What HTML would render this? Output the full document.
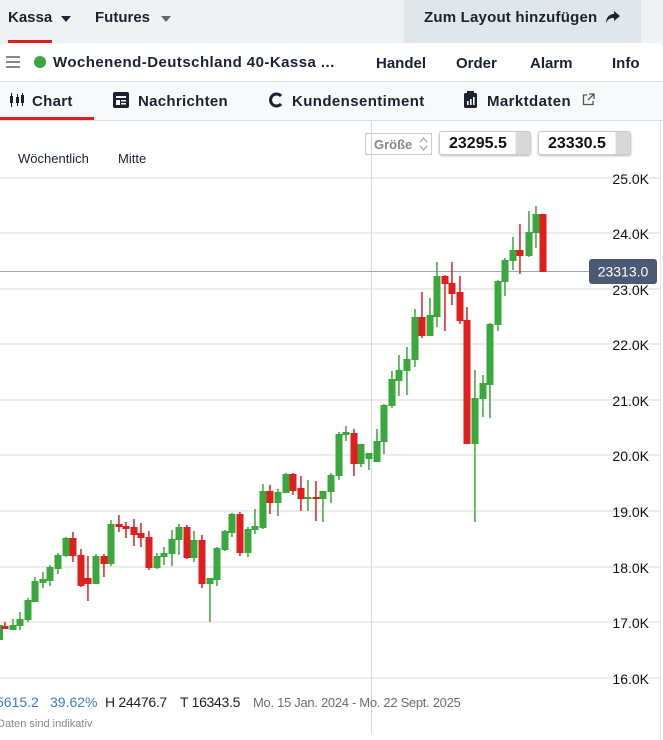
<!DOCTYPE html>
<html><head><meta charset="utf-8"><style>
*{margin:0;padding:0;box-sizing:border-box}
body{width:663px;height:740px;overflow:hidden;background:#eef2f3;font-family:"Liberation Sans",sans-serif;color:#1a2233;position:relative}
.a{position:absolute;white-space:nowrap}
.b{font-weight:bold;font-size:15px}
</style></head><body>
<div class="a" style="left:0;top:0;width:663px;height:43px;background:#eef2f3"></div>
<div class="a b" style="left:8px;top:9px">Kassa</div>
<div class="a" style="left:61px;top:16px;width:0;height:0;border-left:5px solid transparent;border-right:5px solid transparent;border-top:6px solid #1a2233"></div>
<div class="a b" style="left:95px;top:9px">Futures</div>
<div class="a" style="left:161px;top:16px;width:0;height:0;border-left:5px solid transparent;border-right:5px solid transparent;border-top:6px solid #666"></div>
<div class="a" style="left:8px;top:40px;width:44px;height:3px;background:#e01e1e"></div>
<div class="a" style="left:404px;top:0;width:237px;height:43px;background:#e0e7ea"></div>
<div class="a b" style="left:424px;top:9px;letter-spacing:0.2px">Zum Layout hinzufügen</div>
<svg class="a" style="left:605px;top:10px" width="16" height="14" viewBox="0 0 16 14"><path d="M9 1 L15 6 L9 11 L9 8 C5 8 3 9 1 13 C1 8 4 4 9 4 Z" fill="#1a2233"/></svg>

<div class="a" style="left:0;top:43px;width:663px;height:697px;background:#fff;border-radius:6px 6px 0 0"></div>
<div class="a" style="left:6px;top:56px;width:14px;height:2px;background:#888;box-shadow:0 5px 0 #888,0 10px 0 #888"></div>
<div class="a" style="left:34px;top:56px;width:12px;height:12px;border-radius:50%;background:#3aa83c"></div>
<div class="a b" style="left:53px;top:54px;letter-spacing:0.45px">Wochenend-Deutschland 40-Kassa ...</div>
<div class="a b" style="left:376px;top:55px">Handel</div>
<div class="a b" style="left:456px;top:55px">Order</div>
<div class="a b" style="left:530px;top:55px">Alarm</div>
<div class="a b" style="left:612px;top:55px">Info</div>
<div class="a" style="left:0;top:81px;width:663px;height:40px;background:#f7f9fa;border-top:1px solid #dadfe2;border-bottom:1px solid #dadfe2"></div>
<svg class="a" style="left:9px;top:93px" width="16" height="14"><rect x="1" y="3" width="3" height="7" fill="#1a2233"/><rect x="2" y="0" width="1" height="14" fill="#1a2233"/><rect x="7" y="4" width="3" height="6" fill="#1a2233"/><rect x="8" y="1" width="1" height="12" fill="#1a2233"/><rect x="12" y="2" width="3" height="8" fill="#1a2233"/><rect x="13" y="0" width="1" height="13" fill="#1a2233"/></svg>
<div class="a b" style="left:32px;top:93px;letter-spacing:0.3px">Chart</div>
<div class="a" style="left:0;top:117px;width:94px;height:3px;background:#e01e1e"></div>
<svg class="a" style="left:113px;top:92px" width="16" height="16"><rect x="0" y="0" width="16" height="16" rx="2" fill="#1a2233"/><rect x="3" y="4" width="10" height="2" fill="#fff"/><rect x="3" y="8" width="4" height="5" fill="#fff"/><rect x="8" y="8" width="5" height="1.5" fill="#fff"/><rect x="8" y="11" width="5" height="1.5" fill="#fff"/></svg>
<div class="a b" style="left:138px;top:93px;letter-spacing:0.3px">Nachrichten</div>
<svg class="a" style="left:268px;top:92px" width="16" height="16"><path d="M13 4 A6 6 0 1 0 13 12" fill="none" stroke="#1a2233" stroke-width="3"/></svg>
<div class="a b" style="left:292px;top:93px;letter-spacing:0.4px">Kundensentiment</div>
<svg class="a" style="left:464px;top:91px" width="13" height="17"><rect x="0" y="2" width="13" height="15" rx="1.5" fill="#1a2233"/><rect x="3" y="0" width="7" height="4" fill="#1a2233"/><rect x="3" y="10" width="1.6" height="4" fill="#fff"/><rect x="6" y="8" width="1.6" height="6" fill="#fff"/><rect x="9" y="6" width="1.6" height="8" fill="#fff"/></svg>
<div class="a b" style="left:487px;top:93px;letter-spacing:0.4px">Marktdaten</div>
<svg class="a" style="left:582px;top:93px" width="13" height="13"><path d="M5 2 H1.5 V11.5 H11 V8" fill="none" stroke="#555" stroke-width="1.3"/><path d="M7 1 H12 V6 M12 1 L6 7" fill="none" stroke="#555" stroke-width="1.3"/></svg>

<div class="a" style="left:18px;top:151px;font-size:13px">Wöchentlich</div>
<div class="a" style="left:118px;top:151px;font-size:13px">Mitte</div>
<div class="a" style="left:365px;top:133px;width:67px;height:22px;border:1px solid #ccc;font-size:13px;color:#888;padding:3px 0 0 8px;font-weight:bold">Größe</div>
<svg class="a" style="left:419px;top:136px" width="9" height="16"><path d="M1 6 L4.5 2 L8 6 M1 10 L4.5 14 L8 10" fill="none" stroke="#999" stroke-width="1"/></svg>
<div class="a" style="left:439px;top:131px;width:92px;height:24px;border:1px solid #ccc;border-radius:3px;box-shadow:0 1px 2px #bbb;background:linear-gradient(90deg,#fff 84%,#d6d8dc 84%);font-size:16px;font-weight:bold;padding:3px 0 0 9px;color:#111">23295.5</div>
<div class="a" style="left:538px;top:131px;width:93px;height:24px;border:1px solid #ccc;border-radius:3px;box-shadow:0 1px 2px #bbb;background:linear-gradient(90deg,#fff 84%,#d6d8dc 84%);font-size:16px;font-weight:bold;padding:3px 0 0 9px;color:#111">23330.5</div>

<svg class="a" style="left:0;top:0" width="663" height="740">
<g fill="#ececec">
<rect x="0" y="177" width="660" height="2"/><rect x="0" y="232" width="660" height="2"/><rect x="0" y="288" width="660" height="2"/><rect x="0" y="343" width="660" height="2"/><rect x="0" y="399" width="660" height="2"/><rect x="0" y="454" width="660" height="2"/><rect x="0" y="510" width="660" height="2"/><rect x="0" y="566" width="660" height="2"/><rect x="0" y="621" width="660" height="2"/><rect x="0" y="677" width="660" height="2"/>
</g>
<rect x="371" y="121" width="1" height="613" fill="#d8d8d8"/>
<rect x="660" y="121" width="1" height="619" fill="#e4e4e4"/>
<rect x="0" y="271" width="590" height="1" fill="#a0a8b4"/>
<g font-family="Liberation Sans,sans-serif" font-size="14" fill="#111" text-anchor="end">
<text x="649" y="184">25.0K</text><text x="649" y="239">24.0K</text><text x="649" y="295">23.0K</text><text x="649" y="350">22.0K</text><text x="649" y="406">21.0K</text><text x="649" y="461">20.0K</text><text x="649" y="517">19.0K</text><text x="649" y="573">18.0K</text><text x="649" y="628">17.0K</text><text x="649" y="684">16.0K</text>
</g>
<rect x="589" y="259" width="68" height="25" rx="3" fill="#4b5a74"/>
<text x="623" y="276.5" font-family="Liberation Sans,sans-serif" font-size="14" fill="#fff" text-anchor="middle">23313.0</text>
<g id="c">
<g fill="#3aa83c">
<rect x="-2" y="625" width="5" height="15"/>
<rect x="12.2" y="619" width="1.5" height="11"/><rect x="9.5" y="625" width="7" height="5"/>
<rect x="19.2" y="612" width="1.5" height="18"/><rect x="16.5" y="619" width="7" height="7"/>
<rect x="27.2" y="598" width="1.5" height="24"/><rect x="24.5" y="600" width="7" height="20"/>
<rect x="34.2" y="577" width="1.5" height="25"/><rect x="31.5" y="581" width="7" height="21"/>
<rect x="42.2" y="572" width="1.5" height="16"/><rect x="39.5" y="579" width="7" height="4"/>
<rect x="49.2" y="565" width="1.5" height="21"/><rect x="46.5" y="567" width="7" height="14"/>
<rect x="57.2" y="553" width="1.5" height="21"/><rect x="54.5" y="555" width="7" height="14"/>
<rect x="65.2" y="537" width="1.5" height="20"/><rect x="62.5" y="538" width="7" height="18"/>
<rect x="95.2" y="554" width="1.5" height="30"/><rect x="92.5" y="556" width="7" height="28"/>
<rect x="110.2" y="520" width="1.5" height="46"/><rect x="107.5" y="524" width="7" height="40"/>
<rect x="156.2" y="553" width="1.5" height="16"/><rect x="153.5" y="556" width="7" height="12"/>
<rect x="163.2" y="547" width="1.5" height="18"/><rect x="160.5" y="553" width="7" height="4"/>
<rect x="171.2" y="530" width="1.5" height="36"/><rect x="168.5" y="539" width="7" height="15"/>
<rect x="178.2" y="524" width="1.5" height="31"/><rect x="175.5" y="527" width="7" height="13"/>
<rect x="193.2" y="531" width="1.5" height="31"/><rect x="190.5" y="540" width="7" height="18"/>
<rect x="209.2" y="578" width="1.5" height="44"/><rect x="206.5" y="578" width="7" height="6"/>
<rect x="216.2" y="547" width="1.5" height="39"/><rect x="213.5" y="548" width="7" height="32"/>
<rect x="224.2" y="530" width="1.5" height="21"/><rect x="221.5" y="531" width="7" height="19"/>
<rect x="231.2" y="513" width="1.5" height="24"/><rect x="228.5" y="514" width="7" height="19"/>
<rect x="247.2" y="527" width="1.5" height="30"/><rect x="244.5" y="529" width="7" height="24"/>
<rect x="254.2" y="509" width="1.5" height="25"/><rect x="251.5" y="526" width="7" height="4"/>
<rect x="262.2" y="484" width="1.5" height="45"/><rect x="259.5" y="491" width="7" height="37"/>
<rect x="277.2" y="489" width="1.5" height="27"/><rect x="274.5" y="492" width="7" height="11"/>
<rect x="285.2" y="473" width="1.5" height="20"/><rect x="282.5" y="474" width="7" height="19"/>
<rect x="307.2" y="480" width="1.5" height="31"/><rect x="304.5" y="497" width="7" height="2"/>
<rect x="322.2" y="491" width="1.5" height="31"/><rect x="319.5" y="491" width="7" height="8"/>
<rect x="330.2" y="473" width="1.5" height="30"/><rect x="327.5" y="475" width="7" height="17"/>
<rect x="338.2" y="432" width="1.5" height="48"/><rect x="335.5" y="434" width="7" height="42"/>
<rect x="345.2" y="426" width="1.5" height="15"/><rect x="342.5" y="432" width="7" height="3"/>
<rect x="360.2" y="444" width="1.5" height="23"/><rect x="357.5" y="444" width="7" height="20"/>
<rect x="368.2" y="453" width="1.5" height="17"/><rect x="365.5" y="453" width="7" height="6"/>
<rect x="376.2" y="429" width="1.5" height="33"/><rect x="373.5" y="441" width="7" height="21"/>
<rect x="383.2" y="404" width="1.5" height="50"/><rect x="380.5" y="405" width="7" height="37"/>
<rect x="391.2" y="371" width="1.5" height="37"/><rect x="388.5" y="379" width="7" height="27"/>
<rect x="398.2" y="355" width="1.5" height="41"/><rect x="395.5" y="370" width="7" height="11"/>
<rect x="406.2" y="347" width="1.5" height="48"/><rect x="403.5" y="359" width="7" height="12"/>
<rect x="414.2" y="309" width="1.5" height="58"/><rect x="411.5" y="317" width="7" height="43"/>
<rect x="429.2" y="298" width="1.5" height="38"/><rect x="426.5" y="315" width="7" height="21"/>
<rect x="436.2" y="262" width="1.5" height="65"/><rect x="433.5" y="276" width="7" height="41"/>
<rect x="474.2" y="370" width="1.5" height="152"/><rect x="471.5" y="398" width="7" height="46"/>
<rect x="482.2" y="375" width="1.5" height="42"/><rect x="479.5" y="383" width="7" height="16"/>
<rect x="489.2" y="323" width="1.5" height="95"/><rect x="486.5" y="324" width="7" height="61"/>
<rect x="497.2" y="280" width="1.5" height="51"/><rect x="494.5" y="281" width="7" height="44"/>
<rect x="504.2" y="258" width="1.5" height="38"/><rect x="501.5" y="260" width="7" height="22"/>
<rect x="512.2" y="237" width="1.5" height="33"/><rect x="509.5" y="250" width="7" height="11"/>
<rect x="528.2" y="211" width="1.5" height="46"/><rect x="525.5" y="232" width="7" height="24"/>
<rect x="535.2" y="206" width="1.5" height="42"/><rect x="532.5" y="214" width="7" height="19"/>
</g>
<g fill="#e01e1e">
<rect x="4.2" y="622" width="1.5" height="7"/><rect x="1.5" y="626" width="7" height="3"/>
<rect x="72.2" y="532" width="1.5" height="30"/><rect x="69.5" y="538" width="7" height="18"/>
<rect x="80.2" y="549" width="1.5" height="38"/><rect x="77.5" y="555" width="7" height="31"/>
<rect x="87.2" y="556" width="1.5" height="45"/><rect x="84.5" y="578" width="7" height="6"/>
<rect x="103.2" y="554" width="1.5" height="23"/><rect x="100.5" y="556" width="7" height="8"/>
<rect x="118.2" y="515" width="1.5" height="17"/><rect x="115.5" y="524" width="7" height="3"/>
<rect x="125.2" y="522" width="1.5" height="16"/><rect x="122.5" y="526" width="7" height="3"/>
<rect x="133.2" y="519" width="1.5" height="27"/><rect x="130.5" y="527" width="7" height="8"/>
<rect x="140.2" y="523" width="1.5" height="24"/><rect x="137.5" y="533" width="7" height="5"/>
<rect x="148.2" y="531" width="1.5" height="39"/><rect x="145.5" y="537" width="7" height="31"/>
<rect x="186.2" y="525" width="1.5" height="34"/><rect x="183.5" y="527" width="7" height="31"/>
<rect x="201.2" y="535" width="1.5" height="53"/><rect x="198.5" y="540" width="7" height="44"/>
<rect x="239.2" y="512" width="1.5" height="44"/><rect x="236.5" y="514" width="7" height="39"/>
<rect x="269.2" y="485" width="1.5" height="29"/><rect x="266.5" y="491" width="7" height="12"/>
<rect x="292.2" y="473" width="1.5" height="22"/><rect x="289.5" y="474" width="7" height="17"/>
<rect x="300.2" y="476" width="1.5" height="35"/><rect x="297.5" y="488" width="7" height="11"/>
<rect x="315.2" y="481" width="1.5" height="40"/><rect x="312.5" y="497" width="7" height="2"/>
<rect x="353.2" y="429" width="1.5" height="47"/><rect x="350.5" y="433" width="7" height="31"/>
<rect x="421.2" y="292" width="1.5" height="46"/><rect x="418.5" y="317" width="7" height="19"/>
<rect x="444.2" y="275" width="1.5" height="56"/><rect x="441.5" y="276" width="7" height="8"/>
<rect x="451.2" y="262" width="1.5" height="43"/><rect x="448.5" y="283" width="7" height="11"/>
<rect x="459.2" y="276" width="1.5" height="48"/><rect x="456.5" y="292" width="7" height="29"/>
<rect x="466.2" y="307" width="1.5" height="137"/><rect x="463.5" y="320" width="7" height="124"/>
<rect x="519.2" y="224" width="1.5" height="50"/><rect x="516.5" y="250" width="7" height="6"/>
<rect x="539.5" y="214" width="7" height="58"/>
</g>
</g>
</svg>

<div class="a" style="left:-4px;top:694px;font-size:14px;color:#3a7fc4">5615.2</div>
<div class="a" style="left:50px;top:694px;font-size:14px;color:#3a7fc4">39.62%</div>
<div class="a" style="left:105px;top:694px;font-size:14px;color:#222;letter-spacing:-0.3px">H 24476.7</div>
<div class="a" style="left:180px;top:694px;font-size:14px;color:#222;letter-spacing:-0.3px">T 16343.5</div>
<div class="a" style="left:253px;top:695px;font-size:13px;color:#6a6f7a;letter-spacing:-0.3px">Mo. 15 Jan. 2024 - Mo. 22 Sept. 2025</div>
<div class="a" style="left:-3px;top:718px;font-size:11px;color:#888">Daten sind indikativ</div>
</body></html>
